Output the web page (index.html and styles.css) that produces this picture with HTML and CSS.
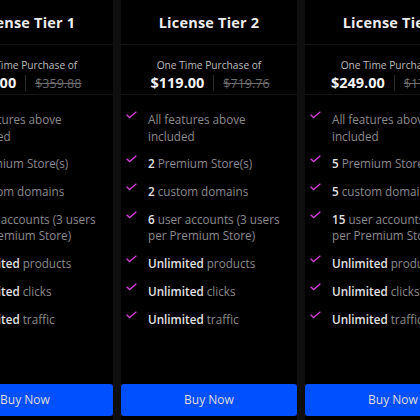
FILE: index.html
```html
<!DOCTYPE html>
<html>
<head>
<meta charset="utf-8">
<link rel="stylesheet" href="styles.css">
</head>
<body>
<div class="row">
  <div class="card">
    <div class="head">License Tier 1</div>
    <div class="price">
      <div class="once">One Time Purchase of</div>
      <div class="amounts"><span class="now">$59.00</span><span class="sep"></span><span class="was">$359.88</span></div>
    </div>
    <ul class="feats">
      <li><svg class="chk" viewBox="0 0 11 8"><path d="M0.6 3.8 L3.6 6.6 L10.4 0.8"/></svg><span>All features above included</span></li>
      <li><svg class="chk" viewBox="0 0 11 8"><path d="M0.6 3.8 L3.6 6.6 L10.4 0.8"/></svg><span><b>1</b> Premium Store(s)</span></li>
      <li><svg class="chk" viewBox="0 0 11 8"><path d="M0.6 3.8 L3.6 6.6 L10.4 0.8"/></svg><span><b>1</b> custom domains</span></li>
      <li><svg class="chk" viewBox="0 0 11 8"><path d="M0.6 3.8 L3.6 6.6 L10.4 0.8"/></svg><span><b>3</b> user accounts (3 users per Premium Store)</span></li>
      <li><svg class="chk" viewBox="0 0 11 8"><path d="M0.6 3.8 L3.6 6.6 L10.4 0.8"/></svg><span><b>Unlimited</b> products</span></li>
      <li><svg class="chk" viewBox="0 0 11 8"><path d="M0.6 3.8 L3.6 6.6 L10.4 0.8"/></svg><span><b>Unlimited</b> clicks</span></li>
      <li><svg class="chk" viewBox="0 0 11 8"><path d="M0.6 3.8 L3.6 6.6 L10.4 0.8"/></svg><span><b>Unlimited</b> traffic</span></li>
    </ul>
    <button class="buy">Buy Now</button>
  </div>
  <div class="card">
    <div class="head">License Tier 2</div>
    <div class="price">
      <div class="once">One Time Purchase of</div>
      <div class="amounts"><span class="now">$119.00</span><span class="sep"></span><span class="was">$719.76</span></div>
    </div>
    <ul class="feats">
      <li><svg class="chk" viewBox="0 0 11 8"><path d="M0.6 3.8 L3.6 6.6 L10.4 0.8"/></svg><span>All features above included</span></li>
      <li><svg class="chk" viewBox="0 0 11 8"><path d="M0.6 3.8 L3.6 6.6 L10.4 0.8"/></svg><span><b>2</b> Premium Store(s)</span></li>
      <li><svg class="chk" viewBox="0 0 11 8"><path d="M0.6 3.8 L3.6 6.6 L10.4 0.8"/></svg><span><b>2</b> custom domains</span></li>
      <li><svg class="chk" viewBox="0 0 11 8"><path d="M0.6 3.8 L3.6 6.6 L10.4 0.8"/></svg><span><b>6</b> user accounts (3 users per Premium Store)</span></li>
      <li><svg class="chk" viewBox="0 0 11 8"><path d="M0.6 3.8 L3.6 6.6 L10.4 0.8"/></svg><span><b>Unlimited</b> products</span></li>
      <li><svg class="chk" viewBox="0 0 11 8"><path d="M0.6 3.8 L3.6 6.6 L10.4 0.8"/></svg><span><b>Unlimited</b> clicks</span></li>
      <li><svg class="chk" viewBox="0 0 11 8"><path d="M0.6 3.8 L3.6 6.6 L10.4 0.8"/></svg><span><b>Unlimited</b> traffic</span></li>
    </ul>
    <button class="buy">Buy Now</button>
  </div>
  <div class="card">
    <div class="head">License Tier 2</div>
    <div class="price">
      <div class="once">One Time Purchase of</div>
      <div class="amounts"><span class="now">$249.00</span><span class="sep"></span><span class="was">$1799.40</span></div>
    </div>
    <ul class="feats">
      <li><svg class="chk" viewBox="0 0 11 8"><path d="M0.6 3.8 L3.6 6.6 L10.4 0.8"/></svg><span>All features above included</span></li>
      <li><svg class="chk" viewBox="0 0 11 8"><path d="M0.6 3.8 L3.6 6.6 L10.4 0.8"/></svg><span><b>5</b> Premium Store(s)</span></li>
      <li><svg class="chk" viewBox="0 0 11 8"><path d="M0.6 3.8 L3.6 6.6 L10.4 0.8"/></svg><span><b>5</b> custom domains</span></li>
      <li><svg class="chk" viewBox="0 0 11 8"><path d="M0.6 3.8 L3.6 6.6 L10.4 0.8"/></svg><span><b>15</b> user accounts (3 users per Premium Store)</span></li>
      <li><svg class="chk" viewBox="0 0 11 8"><path d="M0.6 3.8 L3.6 6.6 L10.4 0.8"/></svg><span><b>Unlimited</b> products</span></li>
      <li><svg class="chk" viewBox="0 0 11 8"><path d="M0.6 3.8 L3.6 6.6 L10.4 0.8"/></svg><span><b>Unlimited</b> clicks</span></li>
      <li><svg class="chk" viewBox="0 0 11 8"><path d="M0.6 3.8 L3.6 6.6 L10.4 0.8"/></svg><span><b>Unlimited</b> traffic</span></li>
    </ul>
    <button class="buy">Buy Now</button>
  </div>
</div>
</body>
</html>
```
FILE: styles.css
```css
html, body {
  margin: 0;
  padding: 0;
  background: #0e0e0e;
  overflow: hidden;
  width: 420px;
  height: 420px;
}
body {
  font-family: "Open Sans", "Noto Sans", sans-serif;
}
.row {
  display: flex;
  gap: 8px;
  margin-left: -63px;
  width: 560px;
  height: 420px;
}
.card {
  flex: 0 0 176px;
  background: #000;
  display: flex;
  flex-direction: column;
  height: 420px;
}
.head {
  height: 44px;
  border-bottom: 1px solid #151515;
  display: flex;
  align-items: center;
  justify-content: center;
  color: #ededed;
  font-weight: 700;
  font-size: 14.5px;
  letter-spacing: 0.2px;
}
.price {
  height: 50px;
  border-bottom: 1px solid #151515;
  display: flex;
  flex-direction: column;
  align-items: center;
  padding-top: 13px;
  box-sizing: border-box;
}
.once {
  color: #bdbdbd;
  font-size: 10.2px;
  line-height: 14px;
}
.amounts {
  display: flex;
  align-items: center;
  margin-top: 1px;
  padding-left: 2px;
}
.now {
  color: #f2f2f2;
  font-weight: 700;
  font-size: 14.5px;
  line-height: 20px;
}
.sep {
  width: 1px;
  height: 16px;
  background: #2a2a2a;
  margin: 0 9px;
}
.was {
  color: #6e6e6e;
  font-size: 12.5px;
  text-decoration: line-through;
}
.feats {
  list-style: none;
  margin: 0;
  padding: 16px 6px 0 5px;
  flex: 1;
}
.feats li {
  display: flex;
  gap: 11px;
  font-size: 11.7px;
  line-height: 16.5px;
  color: #8a8a8a;
  margin-bottom: 11.3px;
}
.feats b {
  color: #e2e2e2;
  font-weight: 600;
}
.chk {
  flex: 0 0 11px;
  width: 11px;
  height: 8px;
  margin-top: 0;
  fill: none;
  stroke: #d23fd3;
  stroke-width: 1.3;
}
.buy {
  margin: 0 0 4px;
  height: 32px;
  border: none;
  border-radius: 3px;
  background: #0050ff;
  color: #dcdcdc;
  font-family: inherit;
  font-size: 12px;
  font-weight: 400;
  padding-bottom: 2px;
}
```
